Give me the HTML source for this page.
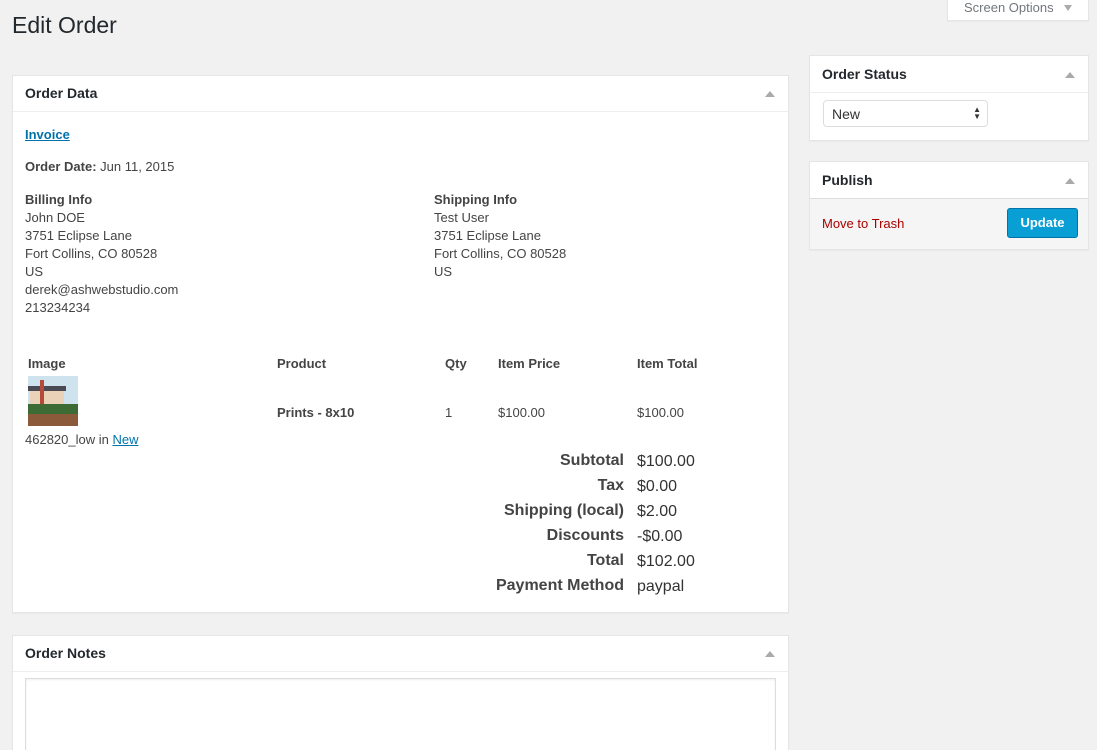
<!DOCTYPE html><html><head><style>
html,body{margin:0;width:1097px;height:750px;overflow:hidden}
body{background:#f1f1f1;font-family:"Liberation Sans",sans-serif;color:#444;font-size:13px;position:relative}
.a{position:absolute;white-space:nowrap}
.box{position:absolute;background:#fff;border:1px solid #e5e5e5;box-shadow:0 1px 1px rgba(0,0,0,.04);box-sizing:border-box}
.hd{position:absolute;left:0;right:0;top:0;border-bottom:1px solid #eee;box-sizing:border-box}
.hd span{position:absolute;left:12px;font-size:14px;font-weight:bold;color:#23282d}
.tri{position:absolute;right:13px;width:0;height:0;border-left:5px solid transparent;border-right:5px solid transparent;border-bottom:6px solid #aaa}
b{color:#444}
a{color:#0073aa}
.tl{position:absolute;right:473px;font-size:16px;font-weight:bold;color:#444;white-space:nowrap}
.tv{position:absolute;left:637px;font-size:16px;color:#333;white-space:nowrap}
</style></head><body>
<div class="a" style="left:12px;top:12px;font-size:23px;color:#23282d">Edit Order</div>
<div class="box" style="left:947px;top:-1px;width:142px;height:22px;"><span class="a" style="left:16px;top:0;color:#72777c">Screen Options</span><span class="a" style="left:116px;top:5px;width:0;height:0;border-left:4px solid transparent;border-right:4px solid transparent;border-top:6px solid #aaa"></span></div>

<div class="box" style="left:12px;top:75px;width:777px;height:538px">
<div class="hd" style="height:36px"><span style="top:9px">Order Data</span><i class="tri" style="top:15px"></i></div>
<a class="a" style="left:12px;top:51px;font-weight:bold;text-decoration:underline;color:#0073aa">Invoice</a>
<div class="a" style="left:12px;top:83px"><b>Order Date:</b> Jun 11, 2015</div>
<div class="a" style="left:12px;top:115px;line-height:18px"><b>Billing Info</b><br>John DOE<br>3751 Eclipse Lane<br>Fort Collins, CO 80528<br>US<br>derek@ashwebstudio.com<br>213234234</div>
<div class="a" style="left:421px;top:115px;line-height:18px"><b>Shipping Info</b><br>Test User<br>3751 Eclipse Lane<br>Fort Collins, CO 80528<br>US</div>
<div class="a" style="left:15px;top:280px;font-weight:bold">Image</div>
<div class="a" style="left:264px;top:280px;font-weight:bold">Product</div>
<div class="a" style="left:432px;top:280px;font-weight:bold">Qty</div>
<div class="a" style="left:485px;top:280px;font-weight:bold">Item Price</div>
<div class="a" style="left:624px;top:280px;font-weight:bold">Item Total</div>
<svg class="a" style="left:15px;top:300px" width="50" height="50"><rect width="50" height="50" fill="#cfe3ee"/><rect x="2" y="12" width="34" height="18" fill="#e9d2b8"/><rect x="0" y="10" width="38" height="5" fill="#4a4a55"/><rect x="12" y="4" width="4" height="26" fill="#b54a3a"/><rect x="0" y="28" width="50" height="12" fill="#3d6b35"/><rect x="0" y="38" width="50" height="12" fill="#8a5a3a"/></svg>
<div class="a" style="left:264px;top:329px;font-weight:bold">Prints - 8x10</div>
<div class="a" style="left:432px;top:329px">1</div>
<div class="a" style="left:485px;top:329px">$100.00</div>
<div class="a" style="left:624px;top:329px">$100.00</div>
<div class="a" style="left:12px;top:356px">462820_low in <a style="text-decoration:underline">New</a></div>
</div>
<div class="tl" style="top:452px">Subtotal</div><div class="tv" style="top:453px">$100.00</div>
<div class="tl" style="top:477px">Tax</div><div class="tv" style="top:478px">$0.00</div>
<div class="tl" style="top:502px">Shipping (local)</div><div class="tv" style="top:503px">$2.00</div>
<div class="tl" style="top:527px">Discounts</div><div class="tv" style="top:528px">-$0.00</div>
<div class="tl" style="top:552px">Total</div><div class="tv" style="top:553px">$102.00</div>
<div class="tl" style="top:577px">Payment Method</div><div class="tv" style="top:578px">paypal</div>

<div class="box" style="left:12px;top:635px;width:777px;height:130px">
<div class="hd" style="height:36px"><span style="top:9px">Order Notes</span><i class="tri" style="top:15px"></i></div>
<div class="a" style="left:12px;top:42px;width:751px;height:100px;border:1px solid #ddd;box-sizing:border-box;box-shadow:inset 0 1px 2px rgba(0,0,0,.07)"></div>
</div>

<div class="box" style="left:809px;top:55px;width:280px;height:86px">
<div class="hd" style="height:37px"><span style="top:10px">Order Status</span><i class="tri" style="top:16px"></i></div>
<div class="a" style="left:13px;top:44px;width:165px;height:27px;border:1px solid #ddd;border-radius:4px;box-sizing:border-box"><span class="a" style="left:8px;top:5px;font-size:14px;color:#333">New</span><span class="a" style="right:6px;top:5px;font-size:8px;line-height:7px;color:#333">▲<br>▼</span></div>
</div>

<div class="box" style="left:809px;top:161px;width:280px;height:89px;background:#f5f5f5">
<div class="hd" style="height:37px;background:#fff;border-bottom:1px solid #ddd"><span style="top:10px">Publish</span><i class="tri" style="top:16px"></i></div>
<div class="a" style="left:12px;top:54px;color:#a00">Move to Trash</div>
<div class="a" style="left:197px;top:46px;width:71px;height:30px;background:#0a9fd4;border:1px solid #0073aa;border-radius:3px;box-sizing:border-box;color:#fff;font-weight:bold;text-align:center;line-height:28px;font-size:13px">Update</div>
</div>
</body></html>
